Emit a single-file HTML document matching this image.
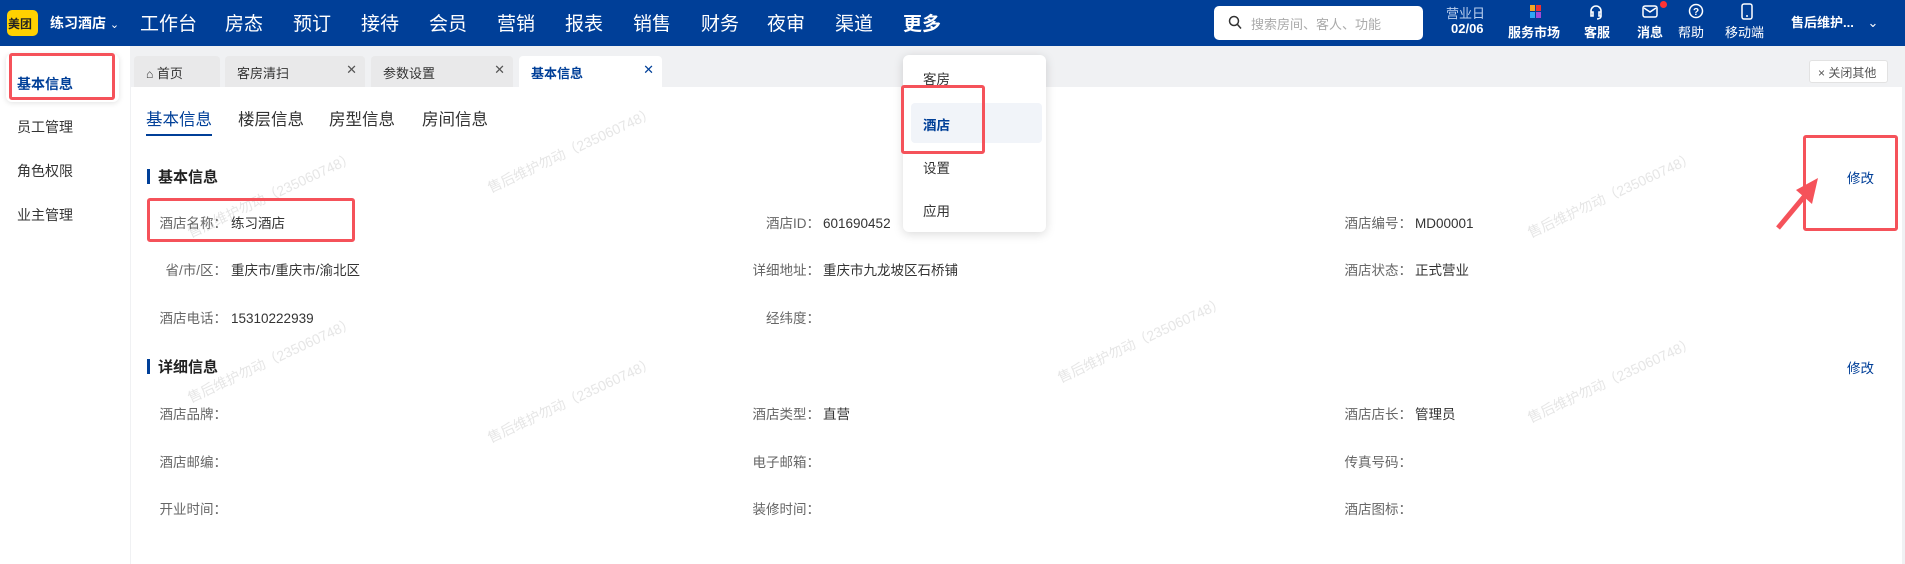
<!DOCTYPE html>
<html style="width:1905px;height:564px;overflow:hidden"><head><meta charset="utf-8"><style>
*{margin:0;padding:0;box-sizing:border-box}
body{width:1905px;height:564px;overflow:hidden;background:#f0f1f3;font-family:"Liberation Sans","Noto Sans CJK SC",sans-serif;position:relative;color:#333;font-size:14px}
.a{position:absolute;white-space:nowrap}
.hdr{position:absolute;left:0;top:0;width:1905px;height:46px;background:#003f98}
.nav{position:absolute;top:9px;color:#fff;font-size:19px}
.ic{position:absolute;color:#fff;font-size:13px;text-align:center}
.side{position:absolute;left:0;top:46px;width:130px;height:518px;background:#fff}
.si{position:absolute;left:17px;font-size:14px;color:#333}
.tab{position:absolute;top:56px;height:31px;background:#e9e9ea;border-radius:4px 4px 0 0;font-size:13px;color:#333;padding:7px 0 0 12px}
.tab .x{position:absolute;right:8px;top:6px;color:#555}
.panel{position:absolute;left:131px;top:87px;width:1771px;height:477px;background:#fff}
.lab,.val{line-height:20px;height:20px}
.lab{position:absolute;font-size:13.5px;color:#666;text-align:right;width:200px}
.val{position:absolute;font-size:13.5px;color:#333}
.red{position:absolute;border:3px solid #f5525a;border-radius:3px}
.wm{position:absolute;color:#e6e6e6;font-size:14px;transform:rotate(-25deg);white-space:nowrap}
.clip{position:absolute;left:0;top:0;width:1905px;height:564px;overflow:hidden}
</style></head><body>
<div class="clip">
<div class="hdr"></div>
<div class="a" style="left:7px;top:10px;width:31px;height:26px;background:#ffd100;border-radius:5px;font-size:12px;font-weight:bold;color:#222;padding:5px 0 0 1px">美团</div>
<div class="a" style="left:50px;top:13px;color:#fff;font-size:14px;font-weight:bold">练习酒店 <span style="font-weight:normal;font-size:11px">⌄</span></div>
<div class="nav" style="left:140px">工作台</div>
<div class="nav" style="left:225px">房态</div>
<div class="nav" style="left:293px">预订</div>
<div class="nav" style="left:361px">接待</div>
<div class="nav" style="left:429px">会员</div>
<div class="nav" style="left:497px">营销</div>
<div class="nav" style="left:565px">报表</div>
<div class="nav" style="left:633px">销售</div>
<div class="nav" style="left:701px">财务</div>
<div class="nav" style="left:767px">夜审</div>
<div class="nav" style="left:835px">渠道</div>
<div class="nav" style="left:903px;font-weight:bold">更多</div>
<div class="a" style="left:1214px;top:6px;width:209px;height:34px;background:#fff;border-radius:5px"></div>
<svg class="a" style="left:1228px;top:15px" width="14" height="15" viewBox="0 0 14 15"><circle cx="6" cy="6" r="4.5" fill="none" stroke="#333" stroke-width="1.5"/><path d="M9.5 9.5l3.5 4" stroke="#333" stroke-width="1.5"/></svg>
<div class="a" style="left:1251px;top:14px;color:#aaa;font-size:13px">搜索房间、客人、功能</div>
<div class="ic" style="left:1446px;top:3px;color:#bcd0ee;font-size:13px">营业日</div>
<div class="ic" style="left:1451px;top:21px;font-weight:bold;font-size:13px">02/06</div>
<svg class="a" style="left:1530px;top:5px" width="12" height="14"><rect x="0" y="0" width="5" height="6" fill="#f5a623"/><rect x="6" y="0" width="5" height="6" fill="#e33"/><rect x="0" y="7" width="5" height="6" fill="#2fa8f5"/><rect x="6" y="7" width="5" height="6" fill="#a34cd8"/></svg>
<div class="ic" style="left:1508px;top:22px;font-weight:bold">服务市场</div>
<svg class="a" style="left:1589px;top:4px" width="14" height="16" viewBox="0 0 14 16"><path d="M2 9V7a5 5 0 0 1 10 0v2M2 8h2v4H2zM10 8h2v4h-2zM12 12c0 2-2 3-4 3" fill="none" stroke="#fff" stroke-width="1.6"/></svg>
<div class="ic" style="left:1584px;top:22px;font-weight:bold">客服</div>
<svg class="a" style="left:1642px;top:5px" width="16" height="13"><rect x="1" y="1" width="14" height="11" rx="2" fill="none" stroke="#fff" stroke-width="1.5"/><path d="M2 3l6 4 6-4" fill="none" stroke="#fff" stroke-width="1.5"/></svg>
<div class="a" style="left:1660px;top:1px;width:7px;height:7px;border-radius:50%;background:#f33"></div>
<div class="ic" style="left:1637px;top:22px;font-weight:bold">消息</div>
<svg class="a" style="left:1688px;top:3px" width="16" height="16"><circle cx="8" cy="8" r="6.5" fill="none" stroke="#fff" stroke-width="1.5"/><text x="8" y="12" font-size="10" fill="#fff" text-anchor="middle" font-family="Liberation Sans" font-weight="bold">?</text></svg>
<div class="ic" style="left:1678px;top:22px">帮助</div>
<svg class="a" style="left:1741px;top:3px" width="12" height="17"><rect x="1" y="1" width="10" height="15" rx="2" fill="none" stroke="#fff" stroke-width="1.5"/><path d="M5 13h2" stroke="#fff" stroke-width="1.5"/></svg>
<div class="ic" style="left:1725px;top:22px">移动端</div>
<div class="a" style="left:1791px;top:12px;color:#fff;font-size:13px;font-weight:bold">售后维护... <span style="margin-left:10px;font-weight:normal">⌄</span></div>

<div class="side"></div>
<div class="a" style="left:6px;top:54px;width:113px;height:48px;background:#fff;border-radius:6px;box-shadow:0 1px 6px rgba(0,0,0,.12)"></div>
<div class="si" style="left:17px;top:74px;color:#003f98;font-weight:bold">基本信息</div>
<div class="si" style="top:117px">员工管理</div>
<div class="si" style="top:161px">角色权限</div>
<div class="si" style="top:205px">业主管理</div>

<div class="tab" style="left:134px;width:86px"><span style="font-size:12px">⌂</span> 首页</div>
<div class="tab" style="left:225px;width:140px">客房清扫<span class="x">✕</span></div>
<div class="tab" style="left:371px;width:142px">参数设置<span class="x">✕</span></div>
<div class="tab" style="left:519px;width:143px;background:#fff;color:#003f98;font-weight:bold">基本信息<span class="x" style="color:#003f98;font-weight:normal">✕</span></div>
<div class="a" style="left:1809px;top:60px;width:79px;height:23px;background:#fff;border:1px solid #e2e2e2;border-radius:3px;font-size:12px;color:#555;padding:3px 0 0 8px">× 关闭其他</div>

<div class="panel"></div>
<div class="a" style="left:146px;top:106px;font-size:16.5px;color:#003f98">基本信息</div>
<div class="a" style="left:146px;top:134px;width:66px;height:2px;background:#003f98"></div>
<div class="a" style="left:238px;top:106px;font-size:16.5px">楼层信息</div>
<div class="a" style="left:329px;top:106px;font-size:16.5px">房型信息</div>
<div class="a" style="left:422px;top:106px;font-size:16.5px">房间信息</div>

<div class="wm" style="left:180px;top:185px">售后维护勿动（235060748）</div>
<div class="wm" style="left:480px;top:140px">售后维护勿动（235060748）</div>
<div class="wm" style="left:1520px;top:185px">售后维护勿动（235060748）</div>
<div class="wm" style="left:180px;top:350px">售后维护勿动（235060748）</div>
<div class="wm" style="left:480px;top:390px">售后维护勿动（235060748）</div>
<div class="wm" style="left:1050px;top:330px">售后维护勿动（235060748）</div>
<div class="wm" style="left:1520px;top:370px">售后维护勿动（235060748）</div>

<div class="a" style="left:147px;top:169px;width:3px;height:15px;background:#003f98"></div>
<div class="a" style="left:158px;top:166px;font-size:15px;font-weight:bold;color:#222">基本信息</div>
<div class="a" style="left:1847px;top:167px;font-size:13.5px;color:#003f98">修改</div>

<div class="lab" style="left:27px;top:214px">酒店名称：</div><div class="val" style="left:231px;top:214px">练习酒店</div>
<div class="lab" style="left:620px;top:214px">酒店ID：</div><div class="val" style="left:823px;top:214px">601690452</div>
<div class="lab" style="left:1212px;top:214px">酒店编号：</div><div class="val" style="left:1415px;top:214px">MD00001</div>
<div class="lab" style="left:27px;top:261px">省/市/区：</div><div class="val" style="left:231px;top:261px">重庆市/重庆市/渝北区</div>
<div class="lab" style="left:620px;top:261px">详细地址：</div><div class="val" style="left:823px;top:261px">重庆市九龙坡区石桥铺</div>
<div class="lab" style="left:1212px;top:261px">酒店状态：</div><div class="val" style="left:1415px;top:261px">正式营业</div>
<div class="lab" style="left:27px;top:309px">酒店电话：</div><div class="val" style="left:231px;top:309px">15310222939</div>
<div class="lab" style="left:620px;top:309px">经纬度：</div>

<div class="a" style="left:147px;top:359px;width:3px;height:15px;background:#003f98"></div>
<div class="a" style="left:158px;top:356px;font-size:15px;font-weight:bold;color:#222">详细信息</div>
<div class="a" style="left:1847px;top:357px;font-size:13.5px;color:#003f98">修改</div>

<div class="lab" style="left:27px;top:405px">酒店品牌：</div>
<div class="lab" style="left:620px;top:405px">酒店类型：</div><div class="val" style="left:823px;top:405px">直营</div>
<div class="lab" style="left:1212px;top:405px">酒店店长：</div><div class="val" style="left:1415px;top:405px">管理员</div>
<div class="lab" style="left:27px;top:453px">酒店邮编：</div>
<div class="lab" style="left:620px;top:453px">电子邮箱：</div>
<div class="lab" style="left:1212px;top:453px">传真号码：</div>
<div class="lab" style="left:27px;top:500px">开业时间：</div>
<div class="lab" style="left:620px;top:500px">装修时间：</div>
<div class="lab" style="left:1212px;top:500px">酒店图标：</div>

<div class="a" style="left:903px;top:55px;width:143px;height:177px;background:#fff;border-radius:6px;box-shadow:0 2px 10px rgba(0,0,0,.15)"></div>
<div class="a" style="left:911px;top:103px;width:131px;height:40px;background:#f1f4f9;border-radius:4px"></div>
<div class="a" style="left:923px;top:68px;font-size:13.5px">客房</div>
<div class="a" style="left:923px;top:114px;font-size:13.5px;color:#003f98;font-weight:bold">酒店</div>
<div class="a" style="left:923px;top:157px;font-size:13.5px">设置</div>
<div class="a" style="left:923px;top:200px;font-size:13.5px">应用</div>

<div class="red" style="left:9px;top:53px;width:106px;height:47px"></div>
<div class="red" style="left:901px;top:85px;width:84px;height:69px"></div>
<div class="red" style="left:147px;top:198px;width:208px;height:44px"></div>
<div class="red" style="left:1803px;top:135px;width:95px;height:96px"></div>
<svg class="a" style="left:1772px;top:172px" width="52" height="62"><path d="M6 56L36 20" stroke="#f5525a" stroke-width="5"/><path d="M46 6L24 18L40 32Z" fill="#f5525a"/></svg>
</div>
</body></html>
